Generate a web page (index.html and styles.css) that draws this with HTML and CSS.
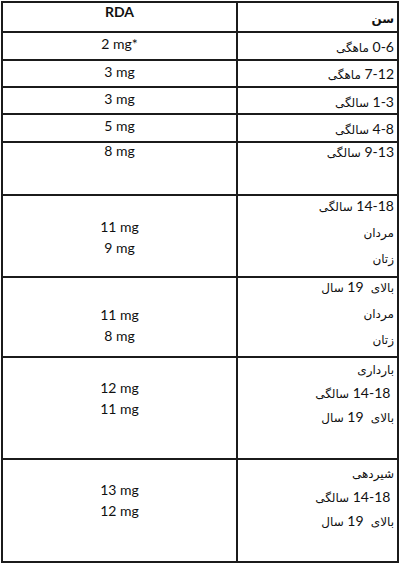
FILE: index.html
```html
<!DOCTYPE html>
<html lang="fa">
<head>
<meta charset="utf-8">
<title>RDA</title>
<link rel="stylesheet" href="styles.css">
</head>
<body>
<div class="table" dir="rtl">
  <div class="cell age head"><div class="ln"><span class="fa b">سن</span></div></div>
  <div class="cell rda head"><div class="ln"><b dir="ltr">RDA</b></div></div>

  <div class="cell age r1"><div class="ln">0-6 <span class="fa">ماهگی</span></div></div>
  <div class="cell rda r1"><div class="ln" dir="ltr">2 mg*</div></div>

  <div class="cell age r2"><div class="ln">7-12 <span class="fa">ماهگی</span></div></div>
  <div class="cell rda r2"><div class="ln" dir="ltr">3 mg</div></div>

  <div class="cell age r3"><div class="ln">1-3 <span class="fa">سالگی</span></div></div>
  <div class="cell rda r3"><div class="ln" dir="ltr">3 mg</div></div>

  <div class="cell age r4"><div class="ln">4-8 <span class="fa">سالگی</span></div></div>
  <div class="cell rda r4"><div class="ln" dir="ltr">5 mg</div></div>

  <div class="cell age r5"><div class="ln">9-13 <span class="fa">سالگی</span></div></div>
  <div class="cell rda r5"><div class="ln" dir="ltr">8 mg</div></div>

  <div class="cell age r6 wide">
    <div class="ln">14-18 <span class="fa">سالگی</span></div>
    <div class="ln"><span class="fa">مردان</span></div>
    <div class="ln"><span class="fa">زتان</span></div>
  </div>
  <div class="cell rda r6">
    <div class="ln" dir="ltr">11 mg</div>
    <div class="ln" dir="ltr">9 mg</div>
  </div>

  <div class="cell age r7 wide">
    <div class="ln"><span class="fa">بالای</span>&nbsp; 19 <span class="fa">سال</span></div>
    <div class="ln"><span class="fa">مردان</span></div>
    <div class="ln"><span class="fa">زتان</span></div>
  </div>
  <div class="cell rda r7">
    <div class="ln" dir="ltr">11 mg</div>
    <div class="ln" dir="ltr">8 mg</div>
  </div>

  <div class="cell age r8">
    <div class="ln"><span class="fa">بارداری</span></div>
    <div class="ln">&nbsp;14-18 <span class="fa">سالگی</span></div>
    <div class="ln"><span class="fa">بالای</span>&nbsp; 19 <span class="fa">سال</span></div>
  </div>
  <div class="cell rda r8">
    <div class="ln" dir="ltr">12 mg</div>
    <div class="ln" dir="ltr">11 mg</div>
  </div>

  <div class="cell age r9">
    <div class="ln"><span class="fa">شیردهی</span></div>
    <div class="ln">&nbsp;14-18 <span class="fa">سالگی</span></div>
    <div class="ln"><span class="fa">بالای</span>&nbsp; 19 <span class="fa">سال</span></div>
  </div>
  <div class="cell rda r9">
    <div class="ln" dir="ltr">13 mg</div>
    <div class="ln" dir="ltr">12 mg</div>
  </div>
</div>
</body>
</html>
```

FILE: styles.css
```css
html, body {
  margin: 0;
  padding: 0;
  background: #ffffff;
}

body {
  padding: 1px 0 0 1px;
  font-family: Lato, "DejaVu Sans", sans-serif;
  font-size: 14px;
  color: #111111;
}

.table {
  display: grid;
  grid-template-columns: 159px 233px;
  grid-template-rows: 28px 26px 25px 25px 26px 51px 80px 78px 100px 101px;
  gap: 2px;
  padding: 2px;
  width: max-content;
  background: #1b1b1b;
}

.cell {
  background: #ffffff;
  display: flex;
  flex-direction: column;
  gap: 8px;
}

.ln {
  line-height: 13px;
  height: 13px;
  white-space: nowrap;
}

.age {
  align-items: flex-start;
  text-align: right;
  padding-right: 3px;
  padding-left: 4px;
  gap: 11px;
}

.age.wide {
  gap: 13px;
}

.rda {
  align-items: center;
  text-align: center;
}

.fa {
  font-family: "DejaVu Sans", sans-serif;
  font-size: 12px;
}

.fa.b {
  font-weight: bold;
  font-size: 12px;
}

.head.rda { padding-top: 2px; }
.head.age { padding-top: 8px; }

.r1.rda, .r2.rda, .r3.rda, .r4.rda { padding-top: 4px; }
.r1.age, .r3.age, .r4.age { padding-top: 7px; }
.r2.age { padding-top: 6px; }

.r5.rda { padding-top: 1px; }
.r5.age { padding-top: 2px; }

.r6.rda { padding-top: 24px; }
.r6.age { padding-top: 3px; }

.r7.rda { padding-top: 30px; }
.r7.age { padding-top: 2px; }

.r8.rda { padding-top: 23px; }
.r8.age { padding-top: 4px; }

.r9.rda { padding-top: 23px; }
.r9.age { padding-top: 6px; }
```
